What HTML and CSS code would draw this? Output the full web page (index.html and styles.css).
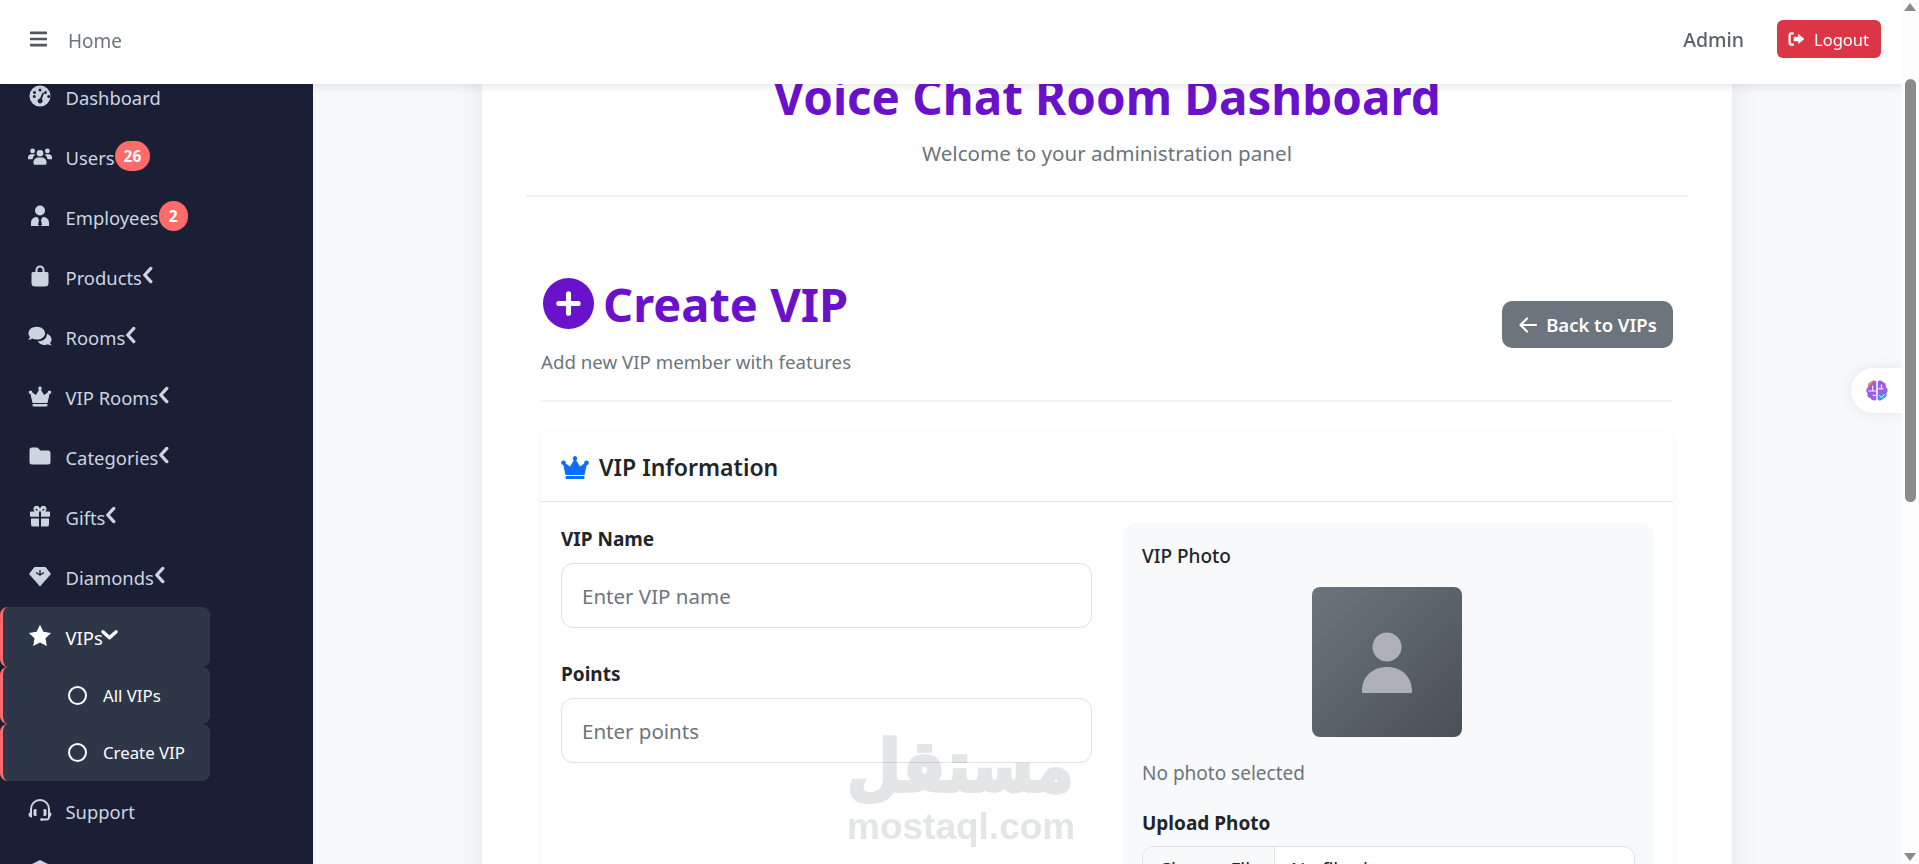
FILE: index.html
```html
<!DOCTYPE html>
<html lang="en">
<head>
  <meta charset="UTF-8" />
  <title>Create VIP</title>
  <link rel="stylesheet" href="styles.css">
</head>
<body>
  <div id="navbar">
    <div class="nav-left">
      <svg class="nav-bars" viewBox="0 0 448 512"><path d="M16 132h416c8.837 0 16-7.163 16-16V76c0-8.837-7.163-16-16-16H16C7.163 60 0 67.163 0 76v40c0 8.837 7.163 16 16 16zm0 160h416c8.837 0 16-7.163 16-16v-40c0-8.837-7.163-16-16-16H16c-8.837 0-16 7.163-16 16v40c0 8.837 7.163 16 16 16zm0 160h416c8.837 0 16-7.163 16-16v-40c0-8.837-7.163-16-16-16H16c-8.837 0-16 7.163-16 16v40c0 8.837 7.163 16 16 16z"/></svg>
      <a href="#">Home</a>
    </div>
    <div class="nav-right">
      <span class="nav-user">Admin</span>
      <button class="logout-btn">
        <svg viewBox="0 0 24 24"><path d="M9 3H6a4 4 0 0 0-4 4v10a4 4 0 0 0 4 4h3v-3H6a1 1 0 0 1-1-1V7a1 1 0 0 1 1-1h3z"/><path d="M15 5l8 7-8 7v-4H9V9h6z"/></svg>
        Logout
      </button>
    </div>
  </div>

  <div class="app">
    <div id="sidebar">
      <a class="side-link" href="#">
        <svg class="side-icon" viewBox="0 0 24 24"><path fill-rule="evenodd" d="M12 1.500a10.500 10.500 0 1 0 0 21 10.500 10.500 0 0 0 0-21zM12 4.500a1.500 1.500 0 1 1 0 3 1.500 1.500 0 0 1 0-3zM6.500 7a1.500 1.500 0 1 1 0 3 1.500 1.500 0 0 1 0-3zM4.800 12.500a1.500 1.500 0 1 1 0 .01zM17.500 7a1.500 1.500 0 1 1 0 3 1.500 1.500 0 0 1 0-3zM19.200 12.500a1.500 1.500 0 1 1 0 .01zM14.500 8.500l1.600.6-2.200 6a2.500 2.500 0 1 1-1.900-.7z"/></svg>
        Dashboard
      </a>
      <a class="side-link" href="#">
        <svg class="side-icon" viewBox="0 0 26 24"><circle cx="13" cy="9" r="3.600"/><circle cx="5" cy="6.500" r="2.600"/><circle cx="21" cy="6.500" r="2.600"/><path d="M6 20.500v-2c0-3 2.500-5 5-5h4c2.500 0 5 2 5 5v2a1 1 0 0 1-1 1H7a1 1 0 0 1-1-1z"/><path d="M0 15.500v-2c0-2 1.500-3.500 3.500-3.500h3c.6 0 1.200.2 1.700.5A7 7 0 0 0 4.800 15.500z"/><path d="M26 15.500v-2c0-2-1.500-3.500-3.500-3.500h-3c-.6 0-1.200.2-1.700.5a7 7 0 0 1 3.400 5z"/></svg>
        Users<span class="side-badge">26</span>
      </a>
      <a class="side-link" href="#">
        <svg class="side-icon" viewBox="0 0 24 24"><circle cx="12" cy="6.500" r="5"/><path d="M3 22v-3.500c0-3 2.500-5.500 5.500-5.500h.8l1.700 3-1 5 2 1 2-1-1-5 1.700-3h.8c3 0 5.500 2.500 5.500 5.500V22z"/></svg>
        Employees<span class="side-badge">2</span>
      </a>
      <a class="side-link" href="#">
        <svg class="side-icon" viewBox="0 0 24 24"><path fill-rule="evenodd" d="M7.500 8V6a4.500 4.500 0 0 1 9 0v2H19a1.500 1.500 0 0 1 1.500 1.500V19a3.500 3.500 0 0 1-3.500 3.500H7A3.500 3.500 0 0 1 3.500 19V9.500A1.500 1.500 0 0 1 5 8zm2 0h5V6a2.500 2.500 0 0 0-5 0z"/></svg>
        Products<svg class="side-arrow" viewBox="0 0 10 16"><path d="M8 2L2.500 8 8 14"/></svg>
      </a>
      <a class="side-link" href="#">
        <svg class="side-icon" viewBox="0 0 26 24"><path d="M9.500 2C4.500 2 .5 5 .5 9c0 1.600.7 3 1.700 4.200-.4 1.200-1.400 2.300-2 2.900 1.700 0 3.300-.7 4.300-1.400 1.500.8 3.200 1.200 5 1.200 5 0 9-3 9-6.900S14.500 2 9.500 2z"/><path d="M20.500 9.500c.2 5-4.500 8.500-10 8.300 1.300 2.400 4.200 4 7.500 4 1.300 0 2.600-.3 3.700-.8.900.6 2.300 1.300 4.100 1.300-.6-.6-1.500-1.700-1.900-2.700 1-1 1.600-2.300 1.600-3.700 0-2.900-2-5.300-5-6.400z"/></svg>
        Rooms<svg class="side-arrow" viewBox="0 0 10 16"><path d="M8 2L2.500 8 8 14"/></svg>
      </a>
      <a class="side-link" href="#">
        <svg class="side-icon" viewBox="0 0 24 24"><path d="M12 2.500a1.800 1.800 0 0 1 1 3.300l3 5.200 3.700-2.500a1.800 1.800 0 1 1 1.800 1.500L19.500 19h-15L2.500 10a1.800 1.800 0 1 1 1.800-1.500L8 11l3-5.200a1.800 1.800 0 0 1 1-3.300z"/><rect x="4.500" y="20" width="15" height="2.500" rx="1"/></svg>
        VIP Rooms<svg class="side-arrow" viewBox="0 0 10 16"><path d="M8 2L2.500 8 8 14"/></svg>
      </a>
      <a class="side-link" href="#">
        <svg class="side-icon" viewBox="0 0 24 24"><path d="M1.500 6a2.500 2.500 0 0 1 2.500-2.500h5.500l3 3H20A2.500 2.500 0 0 1 22.500 9v9a2.500 2.500 0 0 1-2.500 2.500H4A2.500 2.500 0 0 1 1.500 18z"/></svg>
        Categories<svg class="side-arrow" viewBox="0 0 10 16"><path d="M8 2L2.500 8 8 14"/></svg>
      </a>
      <a class="side-link" href="#">
        <svg class="side-icon" viewBox="0 0 24 24"><path d="M2 8.500a1 1 0 0 1 1-1h4.200C5.800 6.800 5.200 5.500 5.600 4c.6-2 3.300-3 5-1.500.6.500 1 1.200 1.400 2 .4-.8.800-1.500 1.400-2 1.700-1.500 4.400-.5 5 1.500.4 1.500-.2 2.800-1.600 3.500H21a1 1 0 0 1 1 1V12a.8.800 0 0 1-.8.800H13V7.500h-2v5.300H2.800A.8.800 0 0 1 2 12zM8 6l2 1c-.3-1-1-2.500-2-2.500A.9.900 0 0 0 8 6zm8 0a.9.900 0 0 0 0-1.500c-1 0-1.700 1.500-2 2.500zM3 14.500h8v8H5a2 2 0 0 1-2-2zm10 0h8v6a2 2 0 0 1-2 2h-6z"/></svg>
        Gifts<svg class="side-arrow" viewBox="0 0 10 16"><path d="M8 2L2.500 8 8 14"/></svg>
      </a>
      <a class="side-link" href="#">
        <svg class="side-icon" viewBox="0 0 24 24"><path d="M6.500 3h11l5.500 7-11 12.500L1 10z"/><path class="icon-cut" d="M8 8.500l4 2.500 4-2.500M12 6v5" fill="none" stroke-width="1.300"/></svg>
        Diamonds<svg class="side-arrow" viewBox="0 0 10 16"><path d="M8 2L2.500 8 8 14"/></svg>
      </a>
      <a class="side-link is-active" href="#">
        <svg class="side-icon" viewBox="0 0 24 24"><path d="M12 .8l3.400 7 7.700 1.100-5.600 5.400 1.300 7.700L12 18.400 5.200 22l1.300-7.700L.9 8.900l7.700-1.100z"/></svg>
        VIPs<svg class="side-arrow is-open" viewBox="0 0 10 16"><path d="M8 2L2.500 8 8 14"/></svg>
      </a>
      <a class="side-link side-sub is-active" href="#"><span class="side-ring"></span>All VIPs</a>
      <a class="side-link side-sub is-active" href="#"><span class="side-ring"></span>Create VIP</a>
      <a class="side-link" href="#">
        <svg class="side-icon" viewBox="0 0 24 24"><path d="M12 1a10 10 0 0 0-10 10v3.500A2.500 2.500 0 0 0 .5 16c0 2 1 3.500 3.500 3.500V11a8 8 0 0 1 16 0v8c0 1-.8 1.500-1.500 1.500h-3.700a1.500 1.500 0 1 0 0 2H18.500c2 0 3.500-1.500 3.500-3.500v-.3c1-.4 1.500-1.700 1.500-3.200A2.500 2.500 0 0 0 22 14.500V11A10 10 0 0 0 12 1z"/><path d="M5.500 12.500A1.500 1.500 0 0 1 7 11h1.500v7H7a1.500 1.500 0 0 1-1.500-1.500zM15.500 11H17a1.500 1.500 0 0 1 1.500 1.500v4A1.500 1.500 0 0 1 17 18h-1.500z"/></svg>
        Support
      </a>
      <a class="side-link" href="#">
        <svg class="side-icon" viewBox="0 0 24 24"><path d="M12 2l10 5v15H2V7z"/></svg>
      </a>
    </div>

    <div class="main">
      <div class="page-card">
        <div class="page-head">
          <h1>Voice Chat Room Dashboard</h1>
          <p>Welcome to your administration panel</p>
        </div>

        <div class="vip-page">
          <div class="vip-head">
            <div>
              <h2 class="vip-title">
                <svg viewBox="0 0 50 50"><circle cx="25" cy="25" r="25"/><path class="plus" d="M25 15.500v19M15.500 25h19"/></svg>
                Create VIP
              </h2>
              <p class="vip-sub">Add new VIP member with features</p>
            </div>
            <button class="back-btn">
              <svg viewBox="0 0 20 20"><path d="M9 3.500L2.500 10 9 16.500M3 10h15"/></svg>
              Back to VIPs
            </button>
          </div>

          <div class="info-card">
            <div class="info-head">
              <svg viewBox="0 0 28 24"><path d="M14 1a2.300 2.300 0 0 1 1.200 4.200l3.800 6.300 4.300-3.100a2.300 2.300 0 1 1 2.400 1.700L23.500 20h-19L2.300 10.100a2.300 2.300 0 1 1 2.400-1.700L9 11.500l3.800-6.300A2.300 2.300 0 0 1 14 1z"/><rect x="4.500" y="21" width="19" height="3" rx="1"/></svg>
              VIP Information
            </div>
            <div class="info-body">
              <div class="form-col">
                <label>VIP Name</label>
                <input class="text-input" type="text" placeholder="Enter VIP name">
                <label>Points</label>
                <input class="text-input" type="text" placeholder="Enter points">
              </div>
              <div class="photo-box">
                <div class="photo-label">VIP Photo</div>
                <div class="photo-preview">
                  <svg viewBox="0 0 50 62"><circle cx="25" cy="16" r="14.500"/><path d="M1 62a2 2 0 0 1-1-2C0 46 10 36 25 36s25 10 25 24a2 2 0 0 1-1 2z"/></svg>
                </div>
                <p class="photo-note">No photo selected</p>
                <label>Upload Photo</label>
                <div class="file-group">
                  <span class="file-btn">Choose File</span>
                  <span class="file-name">No file chosen</span>
                </div>
              </div>
            </div>
          </div>
        </div>
      </div>
    </div>

    <div class="scroll-rail">
      <span class="scroll-up"></span>
      <span class="scroll-thumb"></span>
      <span class="scroll-down"></span>
    </div>
  </div>

  <div class="brain-tab">
    <svg viewBox="0 0 24 24">
      <path fill="#9b5de5" d="M11.300 3.500C10 1.500 7 2 6.500 4 4 4.300 3.300 6.500 4 8.300 2 9.500 1.500 12.500 3.300 14c-.8 2.300.7 4.300 2.700 4.500.5 2 3.600 3.300 5.300 1.500z"/>
      <path fill="#f9844a" d="M6.500 4C4 4.300 3.300 6.500 4 8.300L9 3.300C8.100 2.700 6.800 2.900 6.500 4z"/>
      <path fill="#9b5de5" d="M12.700 3.500C14 1.500 17 2 17.500 4c2.500.3 3.200 2.500 2.500 4.300 2 1.200 2.500 4.200.7 5.700l-8 6z"/>
      <path fill="#2d9cf0" d="M20.700 14c.8 2.300-.7 4.300-2.700 4.500-.5 2-3.600 3.300-5.300 1.500v-4z"/>
      <path fill="none" stroke="#fff" stroke-width=".9" d="M4 12h7M8 7v5M8 16h3M13 10h5M16 6v4M14 16l2 2 3-3"/>
    </svg>
  </div>

  <div class="watermark">
    <span class="mark-ar">مستقل</span>
    <span class="mark-en">mostaql.com</span>
  </div>
</body>
</html>
```

FILE: styles.css
```css
* {
  box-sizing: border-box;
}

html, body {
  margin: 0;
  height: 100%;
  overflow: hidden;
}

body {
  font-family: 'Noto Sans', 'Open Sans', sans-serif;
  background: #f8f9fc;
  color: #212529;
}

svg {
  display: block;
  fill: currentColor;
}

#navbar {
  position: fixed;
  top: 0;
  left: 0;
  right: 17px;
  height: 84px;
  background: #fff;
  display: flex;
  align-items: center;
  justify-content: space-between;
  padding: 0 21px 6px 30px;
  box-shadow: 0 2px 10px rgba(0, 0, 0, 0.1);
  z-index: 100;
}

.nav-left, .nav-right {
  display: flex;
  align-items: center;
}

.nav-bars {
  width: 17px;
  height: 20px;
  color: #50575e;
  margin-right: 21px;
}

.nav-left a {
  color: #6c757d;
  font-size: 19px;
  text-decoration: none;
  margin-top: 3px;
}

.nav-user {
  font-size: 19.500px;
  font-weight: 500;
  color: #5a6268;
  margin-right: 33px;
  margin-top: 1px;
}

.logout-btn {
  display: flex;
  align-items: center;
  gap: 9px;
  width: 104px;
  height: 38px;
  padding: 0 0 0 10px;
  background: #dc3545;
  color: #fff;
  border: none;
  border-radius: 6px;
  font-family: inherit;
  font-size: 16.500px;
}

.logout-btn svg {
  width: 18px;
  height: 18px;
}

.app {
  display: flex;
  height: 864px;
  padding-right: 17px;
}

/* Sidebar */
#sidebar {
  width: 313px;
  flex: none;
  background: #1a1f36;
  padding-top: 67px;
  overflow: hidden;
}

.side-link {
  display: flex;
  align-items: center;
  width: 210px;
  height: 60px;
  padding-left: 28px;
  color: #cbd5e0;
  font-size: 18.400px;
  text-decoration: none;
  white-space: nowrap;
  border-radius: 8px;
}

.side-icon {
  width: 24px;
  height: 24px;
  flex: none;
  margin-right: 13.500px;
  margin-top: -2px;
}

.icon-cut {
  stroke: #1a1f36;
}

.side-badge {
  display: inline-flex;
  align-items: center;
  justify-content: center;
  min-width: 29px;
  height: 30px;
  padding: 0 9px;
  background: #ff6b6b;
  color: #fff;
  border-radius: 15px;
  font-size: 15.500px;
  font-weight: 700;
  margin-top: -3px;
}

.side-arrow {
  width: 11px;
  height: 18px;
  flex: none;
  margin-top: -4px;
  fill: none;
  stroke: currentColor;
  stroke-width: 3;
  stroke-linecap: round;
  stroke-linejoin: round;
}

.side-arrow.is-open {
  transform: rotate(-90deg);
  color: #fff;
  margin-left: 1px;
}

.side-link.is-active {
  background: #2d3748;
  color: #fff;
  border-left: 3px solid #ff6b6b;
  padding-left: 25px;
}

.side-sub {
  height: 57px;
  font-size: 16.800px;
}

.side-link.side-sub {
  padding-left: 65px;
}

.side-ring {
  width: 19px;
  height: 19px;
  border: 2px solid #fff;
  border-radius: 50%;
  margin-right: 16px;
  flex: none;
}

/* Page */
.main {
  flex: 1;
  min-width: 0;
  overflow: hidden;
}

.page-card {
  width: 1250px;
  margin: -30px auto 0 169px;
  padding: 93px 44px 0;
  height: 1100px;
  background: #fff;
  box-shadow: 0 0 30px rgba(40, 45, 90, 0.09);
}

.page-head {
  text-align: center;
  border-bottom: 2px solid #f1f1f6;
  height: 134px;
}

.page-head h1 {
  margin: 0;
  padding-top: 2px;
  font-size: 47.500px;
  line-height: 64px;
  font-weight: 700;
  color: #6a11cb;
}

.page-head p {
  margin: 10px 0 0;
  font-size: 20.600px;
  line-height: 28px;
  color: #6c757d;
}

.vip-page {
  padding: 0 15px;
}

.vip-head {
  display: flex;
  align-items: center;
  justify-content: space-between;
  height: 205px;
  padding: 57px 0 5px;
  border-bottom: 2px solid #f1f1f6;
}

.vip-title {
  display: flex;
  align-items: center;
  gap: 9px;
  margin: 0 0 0 2px;
  font-size: 47px;
  line-height: 56px;
  font-weight: 700;
  color: #6a11cb;
}

.vip-title svg {
  width: 51px;
  height: 51px;
}

.plus {
  fill: none;
  stroke: #fff;
  stroke-width: 5;
  stroke-linecap: round;
}

.vip-sub {
  margin: 18px 0 0;
  font-size: 18.700px;
  line-height: 24px;
  color: #6c757d;
}

.back-btn {
  display: flex;
  align-items: center;
  justify-content: center;
  gap: 8px;
  width: 171px;
  height: 47px;
  background: #6c757d;
  color: #fff;
  border: none;
  border-radius: 10px;
  font-family: inherit;
  font-size: 18.500px;
  font-weight: 600;
  white-space: nowrap;
}

.back-btn svg {
  width: 20px;
  height: 20px;
  fill: none;
  stroke: currentColor;
  stroke-width: 2.200;
  stroke-linecap: round;
  stroke-linejoin: round;
}

.info-card {
  margin-top: 30px;
  background: #fff;
  box-shadow: 0 2px 8px rgba(0, 0, 0, 0.05);
  border-radius: 8px;
}

.info-head {
  display: flex;
  align-items: center;
  gap: 10px;
  height: 70px;
  padding-left: 20px;
  border-bottom: 1px solid #e2e3e6;
  font-size: 23px;
  font-weight: 600;
  color: #212529;
}

.info-head svg {
  width: 28px;
  height: 24px;
  color: #0d6efd;
}

.info-body {
  display: grid;
  grid-template-columns: 531px 531px;
  gap: 31px;
  padding: 21px 19px 0 20px;
}

.form-col {
  padding-top: 3px;
}

label {
  display: block;
  font-size: 19px;
  font-weight: 700;
  line-height: 26px;
  margin-bottom: 11px;
  color: #212529;
}

.text-input {
  display: block;
  width: 100%;
  height: 65px;
  padding: 0 20px;
  margin-bottom: 33px;
  border: 1px solid #dee2e6;
  border-radius: 12px;
  font-family: inherit;
  font-size: 20.500px;
  background: #fff;
}

.text-input::placeholder {
  color: #6c757d;
}

.photo-box {
  height: 500px;
  padding: 20px 19px;
  background: #f8f9fa;
  border-radius: 14px;
}

.photo-label {
  font-size: 19px;
  font-weight: 500;
  line-height: 26px;
}

.photo-preview {
  display: flex;
  align-items: center;
  justify-content: center;
  width: 150px;
  height: 150px;
  margin: 18px 0 0 170px;
  background: linear-gradient(135deg, #6c757d, #495057);
  border-radius: 8px;
}

.photo-preview svg {
  width: 50px;
  height: 62px;
  color: #adb0b4;
}

.photo-note {
  margin: 23px 0 24px;
  font-size: 19px;
  line-height: 26px;
  color: #6c757d;
}

.file-group {
  display: flex;
  height: 58px;
  margin-top: -1px;
  border: 1px solid #dee2e6;
  border-radius: 12px;
  overflow: hidden;
  font-size: 19px;
  line-height: 26px;
  background: #fff;
  white-space: nowrap;
}

.file-btn {
  width: 132px;
  padding: 10px 16px;
  background: #f8f9fa;
  border-right: 1px solid #dee2e6;
}

.file-name {
  padding: 10px 16px;
}

/* Fake window scrollbar */
.scroll-rail {
  position: fixed;
  top: 0;
  right: 0;
  bottom: 0;
  width: 17px;
  background: #fdfdfd;
  z-index: 200;
}

.scroll-thumb {
  position: absolute;
  top: 79px;
  left: 3px;
  width: 11px;
  height: 423px;
  background: #8b8b8b;
  border-radius: 6px;
}

.scroll-up, .scroll-down {
  position: absolute;
  left: 2px;
  width: 0;
  height: 0;
  border-left: 6.500px solid transparent;
  border-right: 6.500px solid transparent;
}

.scroll-up {
  top: 3px;
  border-bottom: 8px solid #8b8b8b;
}

.scroll-down {
  bottom: 3px;
  border-top: 8px solid #8b8b8b;
}

.brain-tab {
  position: fixed;
  top: 368px;
  right: 17px;
  width: 51px;
  height: 45px;
  display: flex;
  align-items: center;
  padding-left: 13px;
  background: #fff;
  border-radius: 23px 0 0 23px;
  box-shadow: 0 0 14px rgba(40, 45, 90, 0.1);
  z-index: 90;
}

.brain-tab svg {
  width: 26px;
  height: 26px;
}

.watermark {
  position: fixed;
  left: 847px;
  top: 735px;
  width: 226px;
  text-align: center;
  color: #e4e5e7;
  mix-blend-mode: multiply;
  z-index: 50;
}

.mark-ar {
  display: block;
  font-family: 'DejaVu Sans', sans-serif;
  font-weight: 700;
  font-size: 62px;
  line-height: 72px;
  white-space: nowrap;
  -webkit-text-stroke: 3px #e4e5e7;
  transform: scaleY(1.15);
  transform-origin: 50% 90%;
}

.mark-en {
  display: block;
  font-family: 'Liberation Sans', sans-serif;
  font-weight: 700;
  font-size: 37px;
  line-height: 40px;
}
```
